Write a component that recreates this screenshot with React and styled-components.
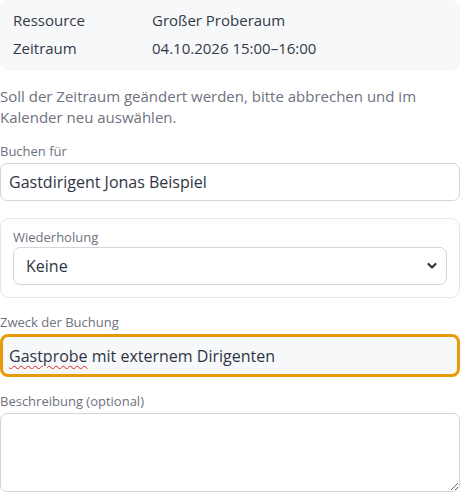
import React from "react";
import styled, { createGlobalStyle } from "styled-components";

const Global = createGlobalStyle`
  html, body { margin: 0; padding: 0; background: #fff; }
  body { font-family: "Open Sans", "Lato", sans-serif; color: #2f3542; }
  * { box-sizing: border-box; }
`;

const Page = styled.div`
  width: 460px;
  display: flex;
  flex-direction: column;
`;

const InfoBox = styled.div`
  background: #f7f8fa;
  border-radius: 9px;
  padding: 6px 13px 9px;
  display: grid;
  grid-template-columns: 139px 1fr;
  grid-auto-rows: 28px;
  align-items: center;
  font-size: 15px;
  color: #333a46;
`;

const Help = styled.p`
  margin: 15px 0 0;
  font-size: 15px;
  line-height: 21px;
  color: #6e7280;
`;

const Label = styled.label`
  display: block;
  font-size: 13px;
  line-height: 18px;
  color: #6e7280;
  margin-top: ${(p) => p.$mt || 0}px;
  margin-bottom: ${(p) => p.$mb ?? 3}px;
`;

const TextInput = styled.input`
  display: block;
  width: 100%;
  height: 38px;
  border: 1px solid #d3d5da;
  border-radius: 7px;
  background: #fff;
  padding: 0 8px;
  font: inherit;
  font-size: 16px;
  color: #2f3542;
  outline: none;
`;

const Fieldset = styled.div`
  margin-top: 17px;
  border: 1px solid #e6e7eb;
  border-radius: 9px;
  padding: 9px 12px 12px;
`;

const SelectWrap = styled.div`
  position: relative;
`;

const Select = styled.select`
  appearance: none;
  display: block;
  width: 100%;
  height: 38px;
  border: 1px solid #d3d5da;
  border-radius: 7px;
  background: #fff;
  padding: 0 12px;
  font: inherit;
  font-size: 16px;
  color: #2f3542;
`;

const Chevron = styled.svg`
  position: absolute;
  right: 10px;
  top: 15px;
  pointer-events: none;
`;

const TextArea = styled.textarea`
  display: block;
  width: 100%;
  height: 79px;
  border: 1px solid #d3d5da;
  border-radius: 7px;
  background: #fff;
  font: inherit;
  resize: vertical;
`;

const Wavy = styled.span`
  text-decoration: underline wavy #e02020;
  text-decoration-thickness: 1px;
  text-underline-offset: 3px;
`;

const FakeInput = styled.div`
  display: flex;
  align-items: center;
  width: 100%;
  height: 43px;
  border: 3px solid #e69b06;
  border-radius: 8px;
  background: #f7f8fa;
  padding: 0 6px;
  font-size: 16px;
  color: #2f3542;
`;

export default function App() {
  return (
    <Page>
      <Global />
      <InfoBox>
        <span>Ressource</span>
        <span>Großer Proberaum</span>
        <span>Zeitraum</span>
        <span>04.10.2026 15:00–16:00</span>
      </InfoBox>
      <Help>
        Soll der Zeitraum geändert werden, bitte abbrechen und im Kalender neu
        auswählen.
      </Help>
      <Label $mt={14}>Buchen für</Label>
      <TextInput defaultValue="Gastdirigent Jonas Beispiel" />
      <Fieldset>
        <Label $mb={1}>Wiederholung</Label>
        <SelectWrap>
          <Select defaultValue="none">
            <option value="none">Keine</option>
          </Select>
          <Chevron width="10" height="8" viewBox="0 0 10 8">
            <path d="M1.5 2 L5 5.5 L8.5 2" fill="none" stroke="#2f3542" strokeWidth="2.2" strokeLinecap="round" strokeLinejoin="round" />
          </Chevron>
        </SelectWrap>
      </Fieldset>
      <Label $mt={15}>Zweck der Buchung</Label>
      <FakeInput>
        <span><Wavy>Gastprobe</Wavy> mit externem Dirigenten</span>
      </FakeInput>
      <Label $mt={15}>Beschreibung (optional)</Label>
      <TextArea />
    </Page>
  );
}
